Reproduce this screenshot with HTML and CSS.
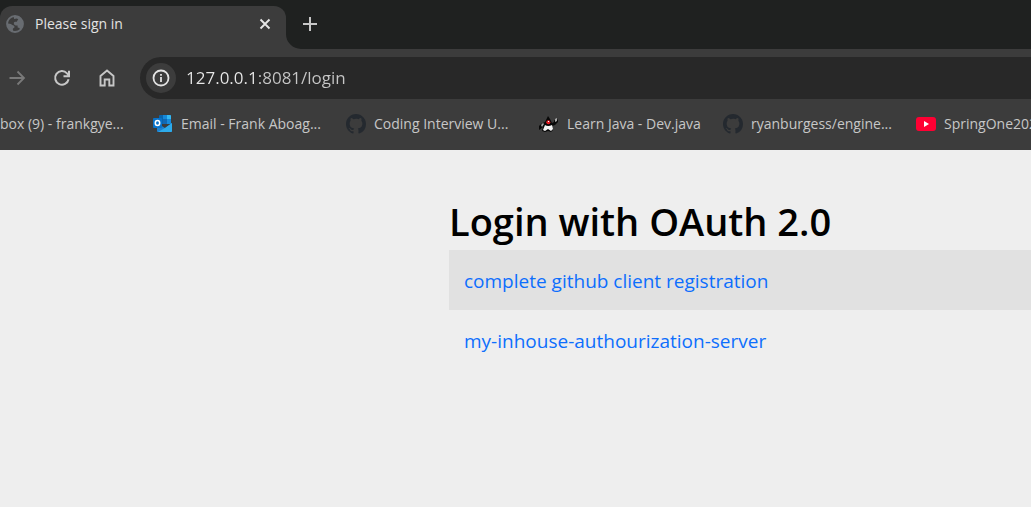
FILE: index.html
```html
<!DOCTYPE html>
<html lang="en">
<head>
<meta charset="utf-8">
<title>Please sign in</title>
<link rel="stylesheet" href="styles.css">
</head>
<body>
<svg class="defs" aria-hidden="true">
  <symbol id="github" viewBox="0 0 16 16"><path fill="#24292f" d="M8 0C3.58 0 0 3.58 0 8c0 3.54 2.29 6.53 5.47 7.59.4.07.55-.17.55-.38 0-.19-.01-.82-.01-1.49-2.01.37-2.53-.49-2.69-.94-.09-.23-.48-.94-.82-1.13-.28-.15-.68-.52-.01-.53.63-.01 1.08.58 1.23.82.72 1.21 1.87.87 2.33.66.07-.52.28-.87.51-1.07-1.78-.2-3.64-.89-3.64-3.95 0-.87.31-1.59.82-2.15-.08-.2-.36-1.02.08-2.12 0 0 .67-.21 2.2.82A7.6 7.6 0 0 1 8 3.86c.68 0 1.36.09 2 .27 1.53-1.04 2.2-.82 2.2-.82.44 1.1.16 1.92.08 2.12.51.56.82 1.27.82 2.15 0 3.07-1.87 3.75-3.65 3.95.29.25.54.73.54 1.48 0 1.07-.01 1.93-.01 2.2 0 .21.15.46.55.38A8.01 8.01 0 0 0 16 8c0-4.42-3.58-8-8-8z"/></symbol>
</svg>
<header class="browser">
  <div class="tabs">
    <div class="tab">
      <svg class="globe" viewBox="0 0 18 18"><circle cx="9" cy="9" r="8" fill="none" stroke="#686c71" stroke-width="1.8"/><path fill="#686c71" d="M9 1h4l4 5v6l-3 3c-.2-1.7-.8-2.4-2.4-2.4v-2.2c-1.8.2-3.8-.1-3.8-2.2C7.8 6.4 10 7 10.8 6.500c.7-.5.5-1.500 1.500-2L11 3.500 8 4V2zM1 8.500c2 0 3.500.2 5 1.200 1 .8 2.500.6 2.500 2.200 0 1.200-1.500.9-1.700 2L7.200 16.500C3.500 16 1 12.500 1 8.500z"/></svg>
      <span class="tab-title">Please sign in</span>
      <button class="close" aria-label="Close tab"><svg viewBox="0 0 12 12"><path d="M1.500 1.500l9 9M10.500 1.500l-9 9" fill="none" stroke="#e6e6e6" stroke-width="1.900"/></svg></button>
    </div>
    <svg class="flare" viewBox="0 0 15 15"><path d="M0 0A15 15 0 0 0 15 15H0z" fill="#3c3c3c"/></svg>
    <button class="new-tab" aria-label="New tab"><svg viewBox="0 0 14 14"><path d="M7 0v14M0 7h14" fill="none" stroke="#c7c7c7" stroke-width="2"/></svg></button>
  </div>
  <nav class="toolbar" aria-label="Navigation">
    <button class="tool" aria-label="Forward"><svg viewBox="0 0 20 20"><path d="M2.500 10h14M10.500 3.500L17 10l-6.500 6.500" fill="none" stroke="#797979" stroke-width="1.800"/></svg></button>
    <button class="tool" aria-label="Reload"><svg viewBox="0 0 20 20"><path d="M16.600 11.200A6.800 6.800 0 1 1 15 5.300L17 7.500M17 2.800v5.500h-5.500" fill="none" stroke="#c7c7c7" stroke-width="2"/></svg></button>
    <button class="tool" aria-label="Home"><svg viewBox="0 0 20 20"><path d="M3.500 17.500V8L10 2.500 16.500 8v9.500h-4.200v-6H7.700v6z" fill="none" stroke="#c7c7c7" stroke-width="1.900"/></svg></button>
    <div class="omnibox">
      <button class="info" aria-label="View site information"><svg viewBox="0 0 18 18"><circle cx="9" cy="9" r="7.500" fill="none" stroke="#e3e3e3" stroke-width="1.800"/><path d="M9 8v5M9 5v1.800" stroke="#e3e3e3" stroke-width="1.800"/></svg></button>
      <input class="address" type="text" aria-label="Address" value="127.0.0.1:8081/login">
    </div>
  </nav>
  <nav class="bookmarks" aria-label="Bookmarks">
    <a class="bookmark first" href="#">box (9) - frankgye...</a>
    <a class="bookmark" href="#"><svg viewBox="0 0 20 20"><path d="M6 2q0-1 1-1h10q1 0 1 1v8H6z" fill="#0a64ad"/><path d="M10 1h4v4h-4z" fill="#1688d8"/><path d="M14 1h3q1 0 1 1v3h-4z" fill="#35b8f1"/><path d="M10 5h4v5h-4z" fill="#1268b4"/><path d="M14 5h4v5h-4z" fill="#168bdc"/><path d="M4 9l8 5 7-5v8q0 1-1 1H5q-1 0-1-1z" fill="#1b82d2"/><path d="M19 9v8q0 1-1 1H5l7-4z" fill="#2dabeb"/><rect y="4" width="9" height="10" rx="1" fill="#0872c9"/><ellipse cx="4.500" cy="9" rx="2.200" ry="2.500" fill="none" stroke="#fff" stroke-width="1.500"/></svg>Email - Frank Aboag...</a>
    <a class="bookmark" href="#"><svg viewBox="0 0 16 16"><use href="#github"/></svg>Coding Interview U...</a>
    <a class="bookmark short" href="#"><svg viewBox="0 0 20 20"><path d="M9 2l2 3 2 4 2-1v-2l2 1 2-2v3l-3 3-3 1 1 4-2 2-3-1-3 1-3-1 1-4-4 3-1-3 3-3 4-2z" fill="#080808"/><path d="M6 11q3 2 7 0l1 4-2 2-3-2-3 2-2-1z" fill="#f4f4f4"/><path d="M2 11l2-2 1 1-2 3zM16 5l2-1v3l-2 1z" fill="#a8a8a8"/><circle cx="9.300" cy="8.300" r="2" fill="#e41b23"/><path d="M9 7h1v1H9z" fill="#fff"/></svg>Learn Java - Dev.java</a>
    <a class="bookmark" href="#"><svg viewBox="0 0 16 16"><use href="#github"/></svg>ryanburgess/engine...</a>
    <a class="bookmark last" href="#"><svg viewBox="0 0 20 20"><rect y="3" width="20" height="14" rx="3" fill="#ff0033"/><path d="M8 7l5 3-5 3z" fill="#fff"/></svg><span class="label">SpringOne202</span></a>
  </nav>
</header>
<main class="page">
  <h1 class="heading">Login with OAuth 2.0</h1>
  <table class="clients">
    <tbody>
      <tr><td><a href="#">complete github client registration</a></td></tr>
      <tr><td><a href="#">my-inhouse-authourization-server</a></td></tr>
    </tbody>
  </table>
</main>
</body>
</html>
```
FILE: styles.css
```css
* { box-sizing: border-box; }

body {
  margin: 0;
  min-height: 100vh;
  background: #eeeeee;
  font-family: "Open Sans", "Noto Sans", sans-serif;
}

button {
  display: flex;
  align-items: center;
  justify-content: center;
  flex: none;
  padding: 0;
  border: 0;
  background: none;
}

svg { display: block; flex: none; }
.defs { width: 0; height: 0; position: absolute; }

.browser { background: #3c3c3c; color: #c7c7c7; }

.tabs {
  display: flex;
  align-items: flex-end;
  height: 49px;
  background: #1f2120;
}

.tab {
  display: flex;
  align-items: center;
  width: 286px;
  height: 43px;
  padding: 0 15px 8px 6px;
  border-radius: 12px 12px 0 0;
  background: #3c3c3c;
}

.globe { width: 18px; height: 18px; }

.tab-title {
  flex: 1;
  margin-left: 11px;
  color: #e3e3e3;
  font-size: 14px;
  line-height: 20px;
}

.close svg { width: 12px; height: 12px; }
.flare { width: 15px; height: 15px; }
.new-tab { width: 18px; height: 50px; }
.new-tab svg { width: 14px; height: 14px; }

.toolbar {
  display: flex;
  align-items: center;
  gap: 25px;
  padding: 8px 0 8px 7px;
}

.tool svg { width: 20px; height: 20px; }

.omnibox {
  display: flex;
  align-items: center;
  flex: 1;
  gap: 10px;
  height: 42px;
  margin-left: -2px;
  padding-left: 6px;
  border-radius: 21px 0 0 21px;
  background: #282828;
}

.info {
  width: 30px;
  height: 30px;
  border-radius: 50%;
  background: #3c3c3c;
}

.info svg { width: 18px; height: 18px; }

/* The host is brighter than the port and path. */
.address {
  flex: 1;
  min-width: 0;
  padding: 0;
  border: 0;
  background: linear-gradient(90deg, #e8e8e8 72px, #c7c7c7 72px) text;
  color: #dcdcdc;
  -webkit-text-fill-color: transparent;
  font: 17px/24px "Open Sans", "Noto Sans", sans-serif;
}

.bookmarks {
  display: flex;
  gap: 21px;
  height: 43px;
  padding-top: 7px;
}

.bookmark {
  display: flex;
  align-items: center;
  flex: none;
  gap: 8px;
  width: 172px;
  height: 20px;
  color: #c7c7c7;
  font-size: 14px;
  line-height: 20px;
  text-decoration: none;
  white-space: nowrap;
}

.bookmark.first { width: 132px; }
.bookmark.short { width: 163px; }
.bookmark.last { flex: 1; min-width: 0; }
.bookmark svg { width: 20px; height: 20px; }
.label { min-width: 0; overflow: hidden; }

.page { padding: 46px 0 0 449px; }

.heading {
  margin: 0;
  padding-bottom: 4px;
  color: #000;
  font-size: 38px;
  font-weight: 600;
  line-height: 50px;
}

.clients {
  width: 100%;
  border-collapse: collapse;
  font-size: 19px;
  line-height: 30px;
}

.clients td { padding: 16px 15px 14px; }
.clients tr:nth-child(odd) { background: #e1e1e1; }
.clients a { color: #0d6efd; text-decoration: none; }
```
